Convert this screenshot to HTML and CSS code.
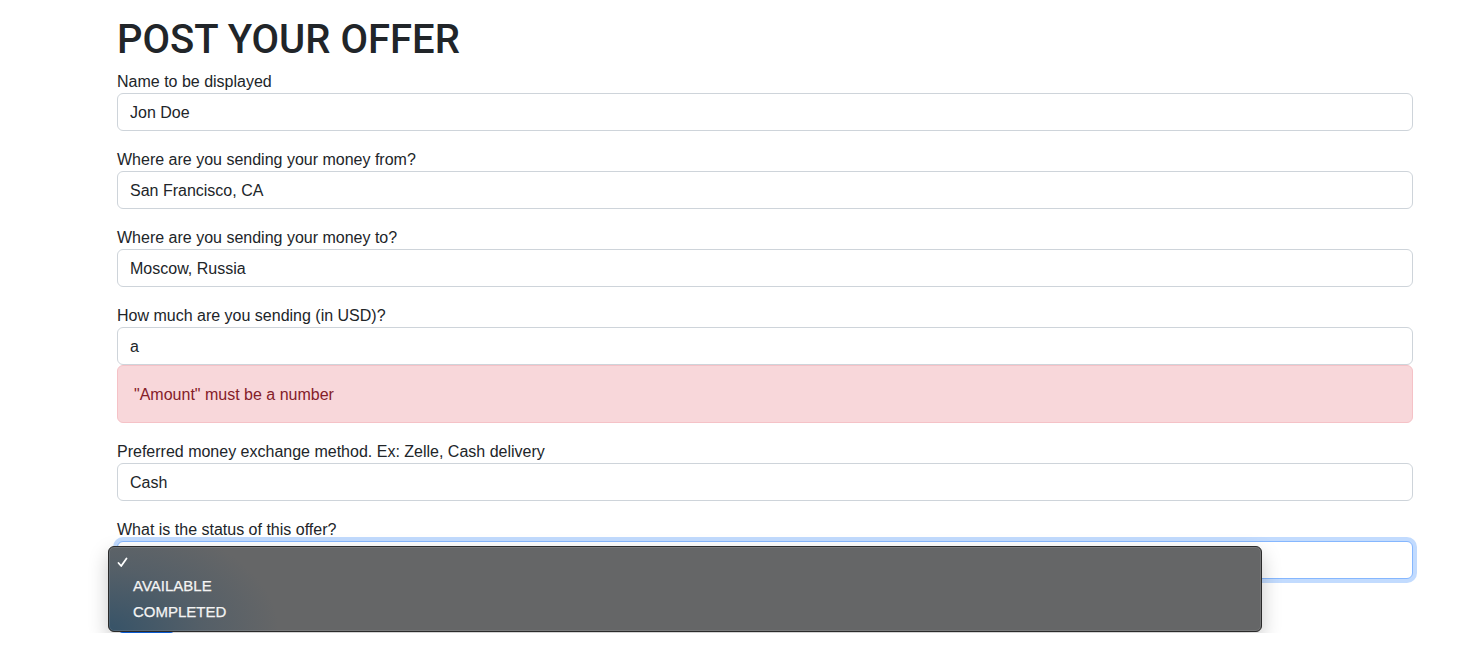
FILE: index.html
```html
<!DOCTYPE html>
<html>
<head>
<meta charset="utf-8">
<link rel="stylesheet" href="styles.css">
</head>
<body>
<main class="page">
  <h1 class="title">POST YOUR OFFER</h1>
  <form class="form">
    <div class="field">
      <label class="label">Name to be displayed</label>
      <input class="control" type="text" value="Jon Doe">
    </div>
    <div class="field">
      <label class="label">Where are you sending your money from?</label>
      <input class="control" type="text" value="San Francisco, CA">
    </div>
    <div class="field">
      <label class="label">Where are you sending your money to?</label>
      <input class="control" type="text" value="Moscow, Russia">
    </div>
    <div class="field">
      <label class="label">How much are you sending (in USD)?</label>
      <input class="control" type="text" value="a">
      <div class="alert">"Amount" must be a number</div>
    </div>
    <div class="field">
      <label class="label">Preferred money exchange method. Ex: Zelle, Cash delivery</label>
      <input class="control" type="text" value="Cash">
    </div>
    <div class="field">
      <label class="label">What is the status of this offer?</label>
      <div class="select-wrap">
        <div class="control select-focus"></div>
        <div class="menu">
          <div class="menu-item row-check">
            <svg class="check" width="11" height="11" viewBox="0 0 11 11"><path d="M1.5 6 L4.2 9 L9.5 1.5" fill="none" stroke="#fff" stroke-width="1.8" stroke-linecap="round" stroke-linejoin="round"/></svg>
          </div>
          <div class="menu-item row-a">AVAILABLE</div>
          <div class="menu-item row-c">COMPLETED</div>
        </div>
      </div>
    </div>
    <button class="btn" type="button" aria-label="Post"></button>
  </form>
</main>
</body>
</html>
```
FILE: styles.css
```css
html, body {
  margin: 0;
  padding: 0;
  background: #fff;
}
body {
  font-family: "Liberation Sans", Arial, sans-serif;
  font-size: 16px;
  line-height: 24px;
  color: #212529;
}
.page {
  width: 1296px;
  padding: 13px 0 0 117px;
}
.title {
  margin: 3px 0 5px 0;
  font-family: Roboto, "Liberation Sans", sans-serif;
  font-weight: 500;
  font-size: 40px;
  line-height: 48px;
  color: #212529;
}
.form {
  display: flex;
  flex-direction: column;
}
.field {
  display: flex;
  flex-direction: column;
  margin-bottom: 16px;
}
.label {
  display: block;
  height: 24px;
  line-height: 26px;
}
.control {
  box-sizing: border-box;
  display: block;
  width: 1296px;
  height: 38px;
  padding: 7px 12px 5px 12px;
  font-family: "Liberation Sans", Arial, sans-serif;
  font-size: 16px;
  line-height: 24px;
  color: #212529;
  background: #fff;
  border: 1px solid #ced4da;
  border-radius: 6px;
  margin: 0;
  outline: none;
}
.alert {
  box-sizing: border-box;
  height: 58px;
  padding: 17px 16px 15px 16px;
  background: #f8d7da;
  border: 1px solid #f5c2c7;
  border-radius: 6px;
  color: #842029;
}
.select-wrap {
  position: relative;
}
.select-focus {
  border-color: #86b7fe;
  box-shadow: 0 0 0 4px rgba(13, 110, 253, 0.25);
}
.menu {
  position: absolute;
  left: -9px;
  top: 5px;
  box-sizing: border-box;
  width: 1154px;
  height: 86px;
  padding: 1px 0 0 0;
  border: 1px solid #2a2a2a;
  border-radius: 6px;
  background:
    radial-gradient(ellipse 170px 110px at 0% 100%, rgba(52, 82, 104, 0.95), rgba(60, 85, 105, 0.4) 55%, rgba(101, 102, 103, 0) 100%),
    #656667;
  box-shadow: 0 8px 20px rgba(0, 0, 0, 0.22), 0 0 0 1px rgba(255, 255, 255, 0.12) inset;
  color: #f4f4f4;
  font-family: "Liberation Sans", Arial, sans-serif;
  font-size: 15px;
  -webkit-text-stroke: 0.25px #f4f4f4;
}
.menu-item {
  padding-left: 24px;
  position: relative;
}
.row-check {
  height: 25px;
  line-height: 25px;
}
.row-a {
  height: 26px;
  line-height: 26px;
}
.row-c {
  height: 26px;
  line-height: 26px;
}
.check {
  position: absolute;
  left: 8px;
  top: 9px;
}
.btn {
  align-self: flex-start;
  box-sizing: border-box;
  width: 59px;
  height: 38px;
  padding: 6px 12px;
  background: #0d6efd;
  border: 1px solid #0d6efd;
  border-radius: 6px;
}
```
